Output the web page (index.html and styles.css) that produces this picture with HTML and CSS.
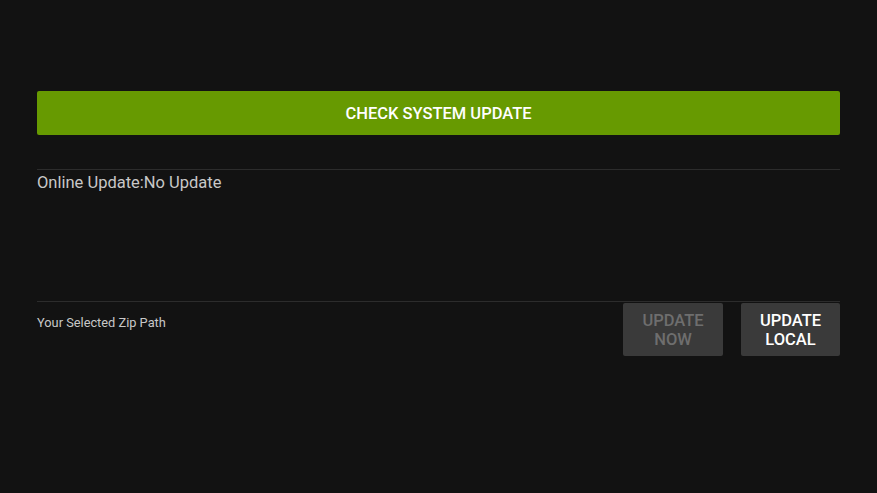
FILE: index.html
```html
<!DOCTYPE html>
<html lang="en">
<head>
    <meta charset="UTF-8">
    <title>System Update</title>
    <link rel="stylesheet" href="styles.css">
</head>
<body>
    <div class="container">
        <button class="check-btn">CHECK SYSTEM UPDATE</button>
        <div class="divider first"></div>
        <p class="status">Online Update:No Update</p>
        <div class="divider"></div>
        <div class="local-row">
            <span class="zip-path">Your Selected Zip Path</span>
            <div class="actions">
                <button class="action-btn" disabled>UPDATE<br>NOW</button>
                <button class="action-btn local">UPDATE<br>LOCAL</button>
            </div>
        </div>
    </div>
</body>
</html>
```

FILE: styles.css
```css
body {
    margin: 0;
    background-color: #121212;
    font-family: Roboto, 'Noto Sans', sans-serif;
    color: #c8c8c8;
    min-height: 100vh;
}
.container {
    padding: 91px 37px 0 37px;
}
.check-btn {
    display: block;
    width: 100%;
    height: 44px;
    background-color: #679a01;
    color: #fff;
    border: none;
    border-radius: 2px;
    font-family: inherit;
    font-size: 16.5px;
    font-weight: 500;
    cursor: pointer;
}
.divider {
    height: 1px;
    background-color: #2c2c2c;
}
.divider.first {
    margin-top: 34px;
}
.status {
    margin: 3px 0 0;
    height: 128px;
    font-size: 16.5px;
    line-height: 20px;
}
.local-row {
    display: flex;
    justify-content: space-between;
    align-items: flex-start;
    padding-top: 1px;
}
.zip-path {
    font-size: 12.8px;
    margin-top: 12px;
}
.actions {
    display: flex;
    gap: 18px;
}
.action-btn {
    width: 100px;
    height: 53px;
    background-color: #3a3a3a;
    color: #fff;
    border: none;
    border-radius: 2px;
    font-family: inherit;
    font-size: 16.5px;
    font-weight: 500;
    line-height: 19px;
    padding: 0;
    cursor: pointer;
}
.action-btn.local {
    width: 99px;
}
.action-btn:disabled {
    color: #6e6e6e;
    background-color: #3a3a3a;
}
```
